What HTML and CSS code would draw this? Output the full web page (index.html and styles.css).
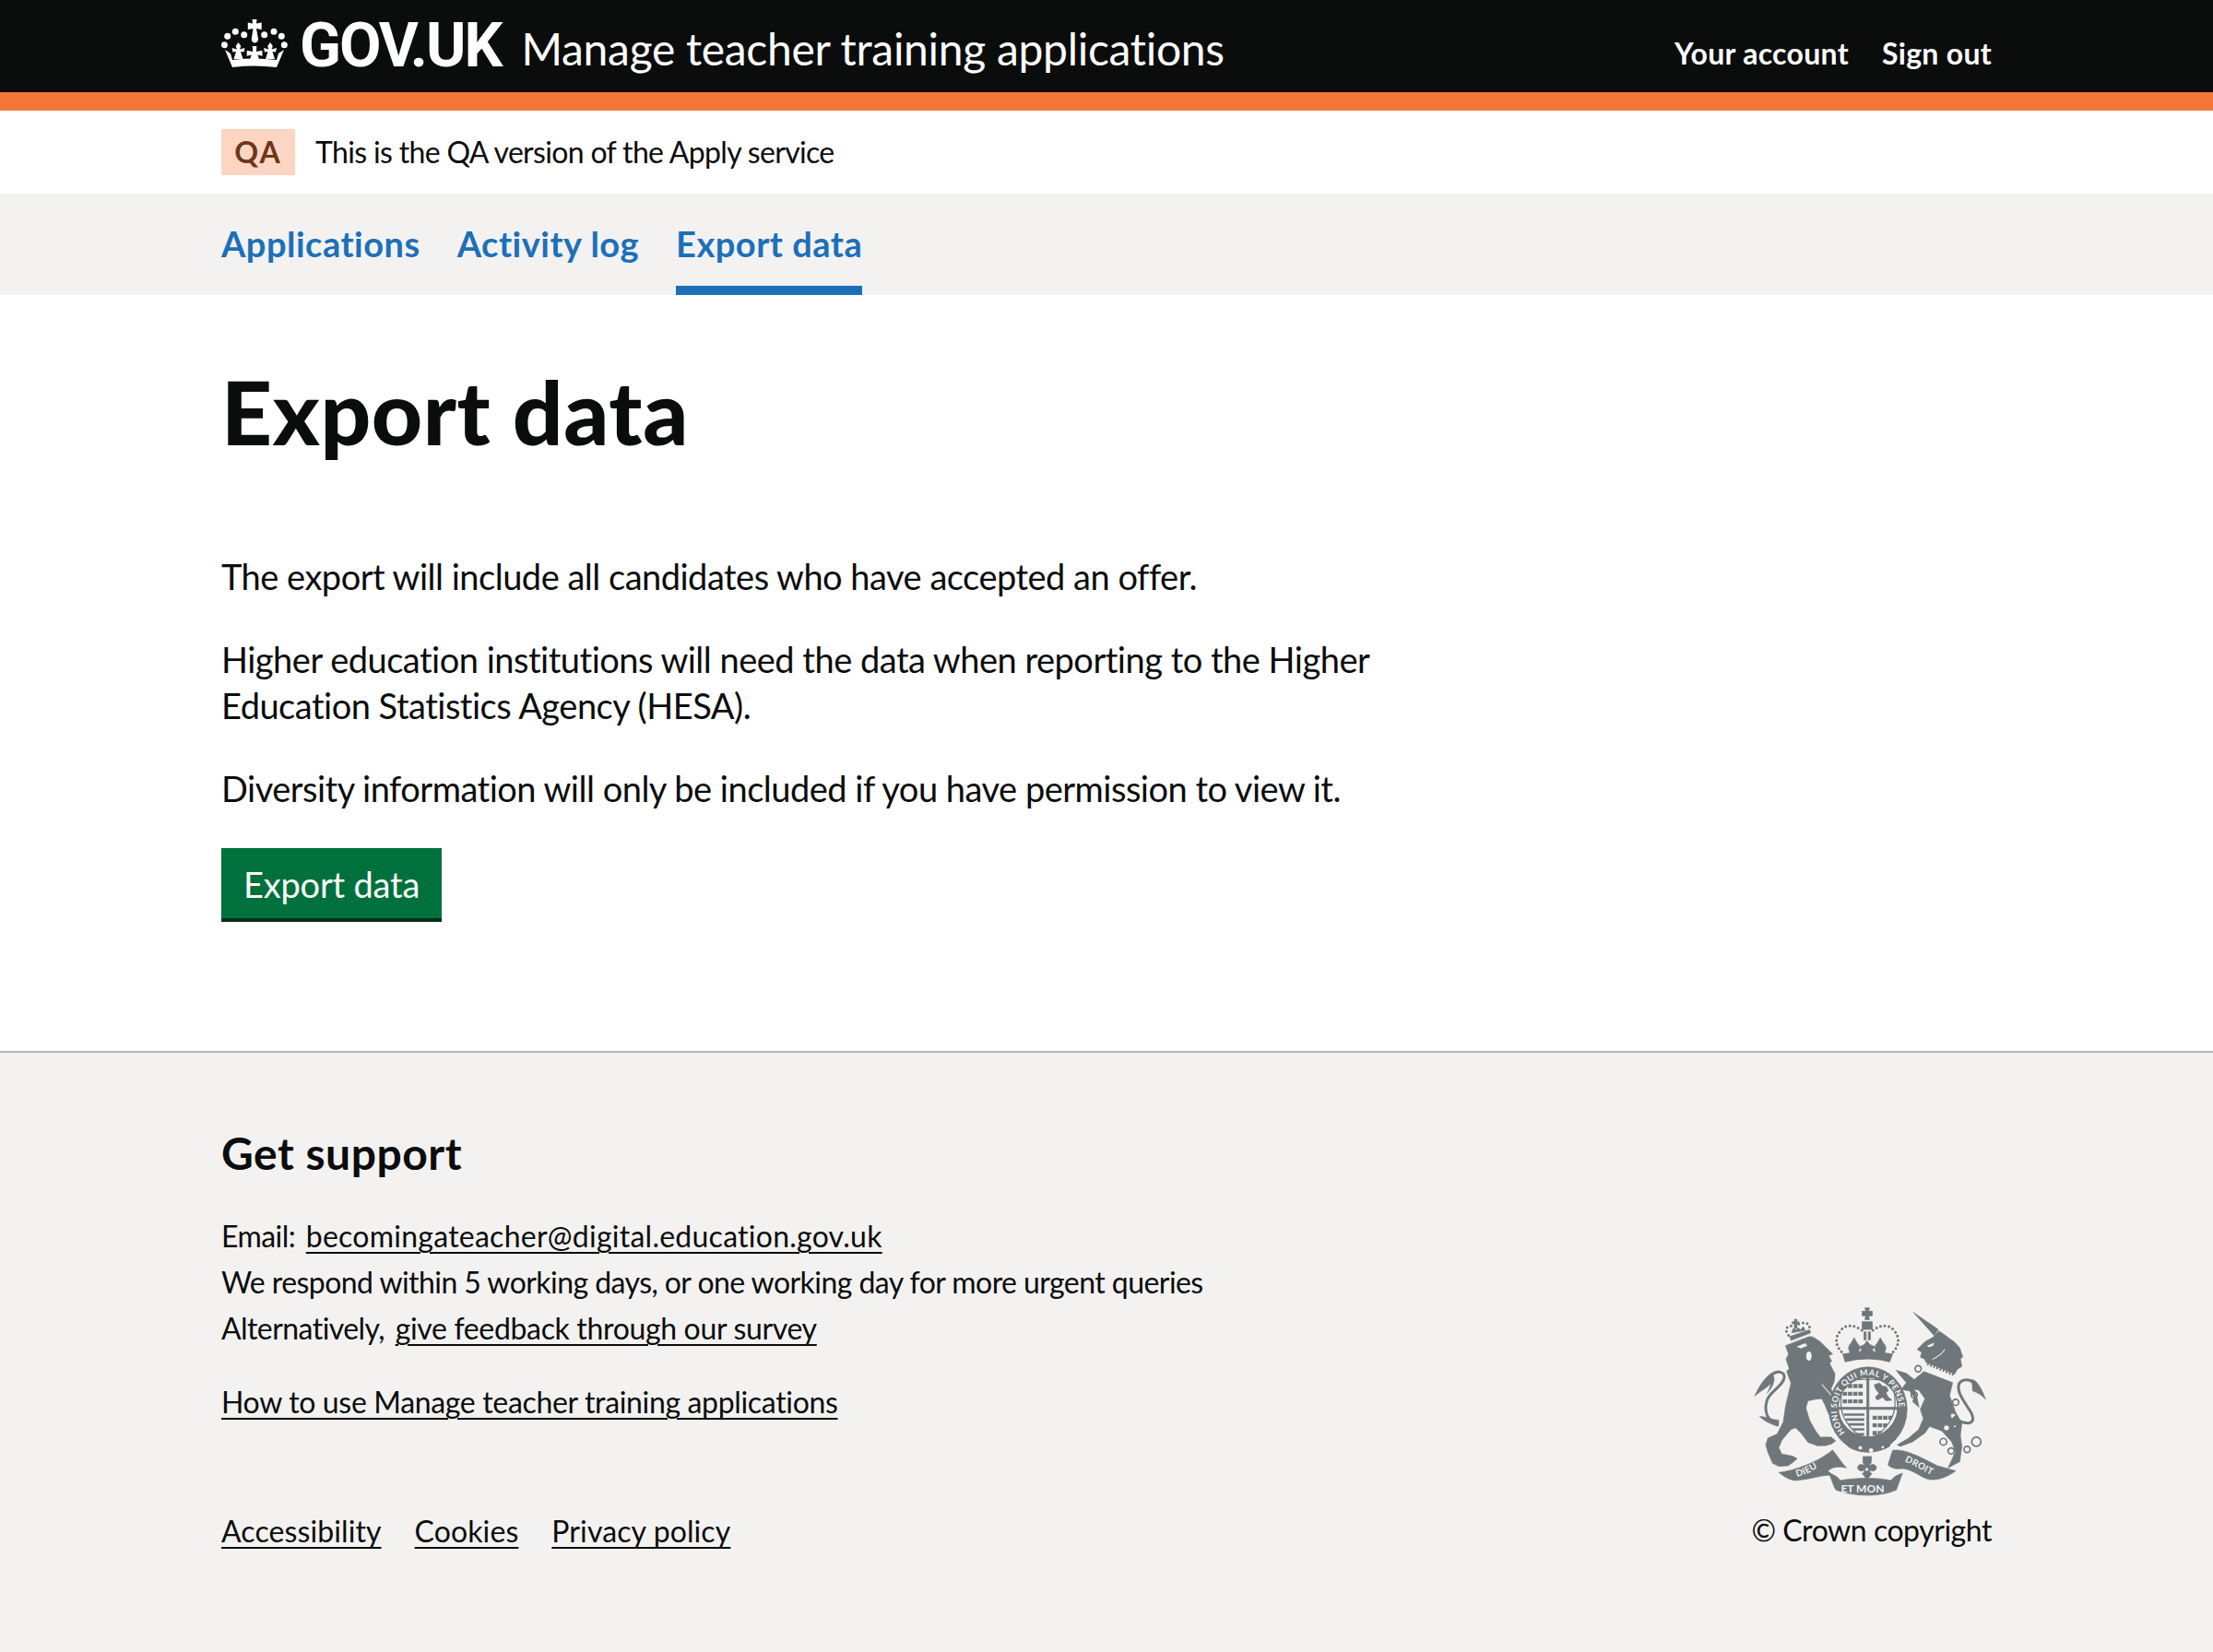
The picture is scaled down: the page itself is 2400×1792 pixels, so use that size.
FILE: index.html
```html
<!DOCTYPE html>
<html lang="en">
<head>
<meta charset="utf-8">
<title>Export data</title>
<link rel="stylesheet" href="styles.css">
</head>
<body>
<header class="header">
  <div class="wrap header-row">
    <div class="brand">
      <svg class="crown" viewBox="0 0 72 52" aria-hidden="true">
        <g fill="#fff">
          <path d="M33.500 0h5l-.5 4.500 5.700-1v7.500l-5.700-1 1.900 10.500a3.700 3.700 0 1 1-7 0L34.500 10l-5.700 1V3.500l5.200 1z"/>
          <circle cx="15.300" cy="13.300" r="3.500"/><circle cx="24.700" cy="16.700" r="3.500"/><circle cx="6.700" cy="18.300" r="3.500"/><circle cx="3.400" cy="27.700" r="3.500"/>
          <circle cx="46.700" cy="16.700" r="3.500"/><circle cx="57" cy="13.300" r="3.500"/><circle cx="65.300" cy="18.300" r="3.500"/><circle cx="68.300" cy="27.700" r="3.500"/>
          <path d="M33.700 29h4.600l-.3 6 6.500-1.300v6l-5-1.200 2.500 7.500h-11.800l2.500-7.500-5 1.200v-6l6.500 1.300z"/>
          <path d="M18.500 25l2.800 4-1.300 3.500 5.500-1.500-1 4.500-3.500-.5 2.500 8h-10l2.500-8-3.500.5-1-4.500 5.500 1.500-1.300-3.500z"/>
          <path d="M53 25l2.800 4-1.300 3.500 5.500-1.500-1 4.500-3.500-.5 2.500 8h-10l2.500-8-3.500.5-1-4.500 5.500 1.500-1.300-3.500z"/>
          <path d="M4 33l6 4 2 7c16-2 32-2 48 0l2-7 6-4-8 19c-16-2-32-2-48 0z"/>
        </g>
      </svg>
      <span class="wordmark">GOV.UK</span>
      <span class="service">Manage teacher training applications</span>
    </div>
    <nav class="account">
      <a class="account-link" href="#">Your account</a>
      <a class="account-link" href="#">Sign out</a>
    </nav>
  </div>
</header>
<div class="phase">
  <div class="wrap phase-row">
    <strong class="tag">QA</strong>
    <span class="phase-text">This is the QA version of the Apply service</span>
  </div>
</div>
<nav class="primary">
  <div class="wrap primary-row">
    <a class="primary-link" href="#">Applications</a>
    <a class="primary-link" href="#">Activity log</a>
    <a class="primary-link current" href="#">Export data</a>
  </div>
</nav>
<main class="main">
  <div class="wrap">
    <h1 class="title">Export data</h1>
    <div class="prose">
      <p class="body">The export will include all candidates who have accepted an offer.</p>
      <p class="body">Higher education institutions will need the data when reporting to the Higher Education Statistics Agency (HESA).</p>
      <p class="body">Diversity information will only be included if you have permission to view it.</p>
    </div>
    <a class="button" href="#">Export data</a>
  </div>
</main>
<footer class="footer">
  <div class="wrap footer-row">
    <div class="footer-left">
      <h2 class="support-title">Get support</h2>
      <p class="small">Email: <a class="flink email inline-link" href="#">becomingateacher@digital.education.gov.uk</a><br>We respond within 5 working days, or one working day for more urgent queries<br>Alternatively, <a class="flink inline-link" href="#">give feedback through our survey</a></p>
      <p class="small howto"><a class="flink" href="#">How to use Manage teacher training applications</a></p>
      <ul class="meta">
        <li><a class="flink" href="#">Accessibility</a></li>
        <li><a class="flink" href="#">Cookies</a></li>
        <li><a class="flink" href="#">Privacy policy</a></li>
      </ul>
    </div>
    <div class="copyright">
      <svg class="arms" viewBox="60 50 770 620" aria-hidden="true">
        <defs>
          <path id="garterLine" d="M369 463A101 110 0 1 1 511 463"/>
          <path id="bandL" d="M205 605C240 598 275 578 312 548"/>
          <path id="bandR" d="M555 553C590 565 625 590 665 607"/>
          <clipPath id="shieldClip"><path d="M352 292Q440 278 528 292L530 372C525 430 480 468 440 490C400 468 355 430 350 372Z"/></clipPath>
        </defs>
        <!-- lion -->
        <path class="ag" d="M172 178L205 165L250 148L262 150L285 165L300 180L325 205L312 210L322 228L315 235L333 270L330 295L320 318L345 385L335 410L320 412L310 395L300 370L290 350L270 352L245 357L238 380L250 420L270 455L285 475L320 475L335 487L322 497L300 503L275 503L245 492L225 465L205 445L190 450L160 485L150 510L160 530L195 537L210 545L195 558L180 568L150 570L130 560L115 525L108 500L115 478L145 465L165 425L172 375L190 300L176 262L184 252L174 222L182 205Z"/>
        <path class="aw" d="M208 181L236 170L243 178L222 187Z"/>
        <ellipse class="aw" cx="248" cy="212" rx="9" ry="15"/>
        <path class="aline" d="M290 303L345 368"/>
        <path class="atail" d="M150 435C115 425 100 395 112 355C122 325 165 310 168 280C168 262 145 258 130 270"/>
        <path class="ag" d="M130 265C110 275 85 310 72 342C90 325 105 320 125 300C120 315 118 325 112 332C125 320 135 300 135 285Z"/>
        <path class="ag" d="M88 408C110 408 130 420 150 420L148 440C130 435 105 425 88 408Z"/>
        <!-- lion crown -->
        <g class="lion-crown">
          <path class="ag" d="M186 140L250 118L254 128L190 153Z"/>
          <path class="adots" d="M182 136C165 115 178 100 205 108C215 92 255 88 250 118"/>
          <path class="ag" d="M201 84h8v8h7v7h-7v14l-8 3V99h-7v-7h7z"/>
          <path class="ag" d="M192 128l5-14 8 6 8-8 8 6 9-10 6 12z"/>
        </g>
        <!-- central crown -->
        <path class="ag" d="M430 55h15l-3 11h12v15h-12l3 12h-15l3-12h-12V66h12z"/>
        <rect class="ag" x="421" y="100" width="33" height="25"/>
        <rect class="ag" x="427" y="133" width="7" height="26"/>
        <rect class="ag" x="441" y="133" width="7" height="26"/>
        <path class="adots" d="M420 128C395 108 365 108 350 130C330 155 335 180 358 202"/>
        <path class="adots" d="M456 128C480 108 510 108 526 130C546 155 540 180 518 202"/>
        <path class="ag" d="M395 152l9 16 8 10-4 4h6l-5 20h-28l-5-20h6l-4-4 8-10zM480 152l9 16 8 10-4 4h6l-5 20h-28l-5-20h6l-4-4 8-10zM437 162l9 12 17 8-9 9 8 11h-50l8-11-9-9 17-8z"/>
        <path class="ag" d="M358 205Q438 190 520 205L510 232Q438 215 366 232Z"/>
        <path class="aline" d="M366 232L373 254M510 232L503 254"/>
        <!-- garter -->
        <ellipse class="ag" cx="440" cy="385" rx="127" ry="138"/>
        <path class="acap" d="M366 232Q438 212 510 232L503 248Q438 232 373 248Z"/>
        <circle class="aw" cx="440" cy="378" r="95"/>
        <g clip-path="url(#shieldClip)">
          <path class="alion" d="M358 309h68M358 334h68M358 359h68M455 412h68M455 437h68M455 462h60"/>
          <path class="ag" d="M460 305l18-6 8 10 14 2 6 14-8 6 8 14 12 10-20 2-10-12-18 10-6-10 12-12-10-12z"/>
          <path class="aharp" d="M362 402L428 402M368 418L428 418M376 434L428 434M388 450L428 450M402 466L428 466"/>
          <path class="ashield" d="M352 292Q440 278 528 292L530 372C525 430 480 468 440 490C400 468 355 430 350 372Z"/>
        </g>
        <rect class="ag" x="436" y="280" width="7" height="210"/>
        <rect class="ag" x="345" y="378" width="190" height="7"/>
        <path class="ag" d="M370 480C400 505 470 510 520 478L510 505C470 530 410 530 375 505Z"/>
        <circle class="aw" cx="415" cy="510" r="6"/><circle class="aw" cx="450" cy="518" r="7"/><circle class="aw" cx="488" cy="508" r="4"/>
        <!-- unicorn -->
        <path class="ag" d="M588 70L668 125L655 145Z"/>
        <path class="ag" d="M652 150L665 135L670 130L688 142L705 155L720 165L738 185L748 215L740 220L745 245L730 255L722 270L628 232L625 222L610 215L615 200L600 190L625 165Z"/>
        <path class="aw" d="M632 178L655 168L652 178L638 183Z"/>
        <path class="aline" d="M690 190C680 205 665 215 650 222"/>
        <path class="ag" d="M622 262L715 298L705 340L725 395L745 430L740 470L745 505L738 555L700 575L712 550L724 522L712 490L680 455L640 440L625 462L585 490L545 505L535 500L570 480L605 450L620 415L610 385L625 350L605 322L590 320L600 350L606 378L585 360L590 345L575 325L548 320L565 298L545 275L532 258L565 268L590 288Z"/>
        <path class="acollar" d="M626 242L722 282"/>
        <path class="ateeth" d="M632 236L718 272"/>
        <circle class="aw" cx="716" cy="406" r="7"/><circle class="aw" cx="695" cy="445" r="8"/><circle class="aw" cx="722" cy="440" r="3"/>
        <path class="atail" d="M717 410C760 440 795 435 775 395C750 355 725 325 737 300C748 285 770 285 785 300"/>
        <path class="ag" d="M778 288C795 290 810 320 822 352C805 335 795 330 780 325Z"/>
        <g class="aring">
          <circle cx="685" cy="490" r="11"/><circle cx="710" cy="520" r="10"/><circle cx="762" cy="515" r="10"/><circle cx="792" cy="490" r="15"/><circle cx="725" cy="362" r="10"/><circle cx="603" cy="253" r="10"/><circle cx="590" cy="338" r="10"/>
        </g>
        <!-- motto -->
        <path class="ag" d="M150 590C200 585 280 555 325 517C340 535 355 560 370 575C345 570 325 570 310 585L325 600C290 595 250 615 200 616C180 612 165 602 150 590Z"/>
        <path class="ag" d="M312 590C322 612 328 635 336 647C400 670 480 670 532 647L552 592C530 600 522 606 515 616C470 606 400 606 350 616C345 608 335 600 312 590Z"/>
        <path class="ag" d="M520 518C560 512 610 540 665 568L725 585C695 606 665 618 635 612C600 600 575 572 540 578C515 578 505 565 505 565Z"/>
        <path class="ag" d="M424 538h28l-2 22-8 7c4 0 8-3 14-3 12 0 16 14 5 20-6 3-12 0-14-3-1 5-2 10 6 12l-16 20-16-20c8-2 7-7 6-12-2 3-8 6-14 3-11-6-7-20 5-20 6 0 10 3 14 3l-8-7z"/>
        <circle class="aw" cx="436" cy="580" r="5"/>
        <g class="arms-text">
          <text class="arms-garter"><textPath href="#garterLine" startOffset="4">HONI SOIT QUI MAL Y PENSE</textPath></text>
          <text class="arms-band"><textPath href="#bandL" startOffset="4">DIEU</textPath></text>
          <text class="arms-band"><textPath href="#bandR" startOffset="4">DROIT</textPath></text>
          <text x="352" y="654">ET MON</text>
        </g>
      </svg>
      <p class="small copy-text">© Crown copyright</p>
    </div>
  </div>
</footer>
</body>
</html>
```
FILE: styles.css
```css
* { box-sizing: border-box; }
html, body { margin: 0; padding: 0; }
body {
  font-family: Lato, "Noto Sans", sans-serif;
  font-variant-ligatures: none;
  color: #0b0c0c;
  background: #fff;
  font-size: 38px;
  letter-spacing: -0.5px;
}
a { color: inherit; }
.wrap { width: 1920px; margin: 0 auto; }

.header { background: #0b0c0c; border-bottom: 20px solid #f47738; height: 120px; color: #fff; }
.header-row { display: flex; justify-content: space-between; align-items: center; height: 100px; }
.brand { display: flex; align-items: center; }
.crown { width: 72px; height: 52px; margin-right: 13px; margin-top: -6px; flex: none; }
.wordmark { font-family: Roboto, sans-serif; font-size: 66px; font-weight: 700; line-height: 100px; margin-right: 22px; letter-spacing: -2px; }
.service { font-size: 48px; line-height: 100px; margin-top: 6px; letter-spacing: -0.3px; }
.account { display: flex; gap: 36px; margin-top: 14px; }
.account-link { color: #fff; text-decoration: none; font-size: 32px; font-weight: 700; letter-spacing: 0.3px; }

.phase { background: #fff; height: 90px; }
.phase-row { display: flex; align-items: center; height: 90px; }
.tag { background: #fcd6c3; color: #6e3619; font-size: 32px; font-weight: 700; width: 80px; height: 50px; line-height: 50px; text-align: center; letter-spacing: 2px; margin-right: 22px; }
.phase-text { font-size: 32px; letter-spacing: -0.66px; line-height: 88px; }

.primary { background: #f3f2f1; height: 110px; }
.primary-row { display: flex; gap: 40px; height: 110px; }
.primary-link { color: #1d70b8; font-size: 38px; font-weight: 700; text-decoration: none; line-height: 108px; height: 110px; letter-spacing: 0.5px; }
.current { border-bottom: 10px solid #1d70b8; }

.main { padding: 76px 0 140px; background: #fff; }
.title { font-size: 96px; font-weight: 900; line-height: 100px; margin: 0 0 104px; letter-spacing: 0.6px; }
.prose { width: 1280px; }
.body { margin: 0 0 40px; font-size: 38px; line-height: 50px; }
.button { display: block; width: fit-content; background: #00703c; color: #fff; text-decoration: none; font-size: 38px; line-height: 50px; padding: 14px 24px 12px; box-shadow: 0 4px 0 #002d18; height: 76px; margin-bottom: 4px; letter-spacing: -0.2px; }

.footer { background: #f3f2f1; border-top: 2px solid #b1b4b6; height: 652px; }
.footer-row { display: flex; justify-content: space-between; padding-top: 84px; }
.support-title { font-size: 48px; line-height: 50px; font-weight: 700; margin: 0 0 40px; letter-spacing: 0.5px; }
.small { font-size: 32px; line-height: 50px; margin: 0 0 30px; letter-spacing: -0.56px; }
.flink { color: #0b0c0c; text-decoration: underline; text-decoration-thickness: 2px; text-underline-offset: 5px; letter-spacing: -0.34px; }
.inline-link { margin-left: 4px; }
.email { letter-spacing: 0.25px; }
.meta { display: flex; gap: 36px; list-style: none; margin: 90px 0 0; padding: 0; font-size: 32px; line-height: 50px; }
.meta .flink { letter-spacing: 0.1px; }
.copyright { display: flex; flex-direction: column; align-items: flex-end; padding-top: 191px; }
.arms { width: 257px; height: 207px; margin-right: 4px; flex: none; }
.copy-text { margin: 11px 0 0; letter-spacing: -0.46px; }

.ag { fill: #6f777b; stroke: #6f777b; stroke-width: 2; stroke-linejoin: round; }
.aw { fill: #f3f2f1; }
.acap { fill: #f3f2f1; }
.lion-crown { transform: translateY(8px); }
.aline { fill: none; stroke: #f3f2f1; stroke-width: 3; }
.atail { fill: none; stroke: #6f777b; stroke-width: 9; }
.adots { fill: none; stroke: #6f777b; stroke-width: 9; stroke-linecap: round; stroke-dasharray: 0 14; }
.aring { fill: none; stroke: #6f777b; stroke-width: 5; }
.alion { fill: none; stroke: #6f777b; stroke-width: 13; stroke-dasharray: 14 3; }
.aharp { fill: none; stroke: #6f777b; stroke-width: 8; }
.ashield { fill: none; stroke: #6f777b; stroke-width: 8; }
.acollar { fill: none; stroke: #f3f2f1; stroke-width: 18; }
.ateeth { fill: none; stroke: #6f777b; stroke-width: 9; stroke-dasharray: 6 5; }
.arms-text { font-family: Lato, sans-serif; font-weight: 700; font-size: 36px; fill: #f3f2f1; letter-spacing: 0; }
.arms-garter { font-size: 27px; letter-spacing: 1.5px; }
.arms-band { font-size: 30px; letter-spacing: 1px; }
```
